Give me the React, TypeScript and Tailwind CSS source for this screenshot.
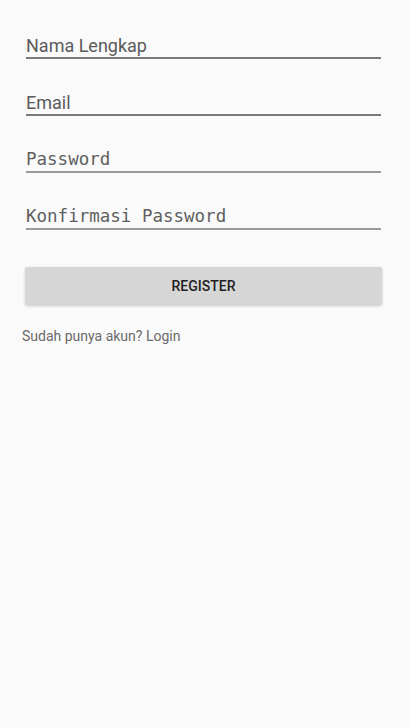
import React from "react";

const Field = ({ label, mono, dark }: { label: string; mono?: boolean; dark?: boolean }) => (
  <div className="ml-[4px] w-[355px]">
    <div
      className={
        mono
          ? "h-[23px] leading-[23px] text-[17.5px] text-[#5f5f5f] whitespace-pre"
          : "h-[23px] leading-[24px] text-[18px] text-[#5a5a5a]"
      }
      style={{ fontFamily: mono ? '"DejaVu Sans Mono", monospace' : 'Roboto, "Noto Sans", sans-serif' }}
    >
      {label}
    </div>
    <div className={dark ? "h-[2px] bg-[#7a7a7a]" : "h-[2px] bg-[#9a9a9a]"} />
  </div>
);

export default function App() {
  return (
    <div className="min-h-screen bg-[#fafafa] px-[22px] pt-[34px]" style={{ fontFamily: 'Roboto, "Noto Sans", sans-serif' }}>
      <div className="flex flex-col gap-[32px]">
        <Field label="Nama Lengkap" dark />
        <Field label="Email" dark />
        <Field label="Password" mono />
        <Field label="Konfirmasi Password" mono />
      </div>
      <button className="ml-[3px] mt-[37px] flex h-[38px] w-[357px] items-center justify-center rounded-[2px] bg-[#d6d6d6] pt-[1px] text-[14px] font-medium text-[#1e1e1e] shadow-[0_1px_3px_rgba(0,0,0,0.2)]">
        REGISTER
      </button>
      <div className="mt-[21px] h-[20px] text-[14px] leading-[20px] text-[#6a6a6a]">Sudah punya akun? Login</div>
    </div>
  );
}
